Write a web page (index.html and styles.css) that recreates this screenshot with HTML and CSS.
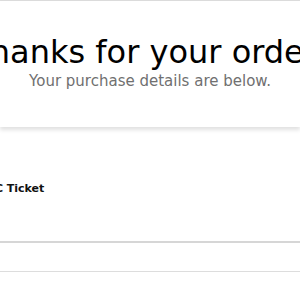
FILE: index.html
```html
<!DOCTYPE html>
<html>
<head>
<meta charset="utf-8">
<link rel="stylesheet" href="styles.css">
</head>
<body>
<div class="page">
  <header class="hero">
    <h1 class="title">Thanks for your order!</h1>
    <p class="subtitle">Your purchase details are below.</p>
  </header>
  <section class="order">
    <div class="item">
      <div class="item-name">ABC Ticket</div>
    </div>
    <div class="row"></div>
  </section>
</div>
</body>
</html>
```
FILE: styles.css
```css
html, body {
  margin: 0;
  padding: 0;
  background: #fff;
  overflow: hidden;
}
.page {
  width: 300px;
  font-family: "DejaVu Sans", "Liberation Sans", sans-serif;
  border-top: 1px solid #dcdcdc;
}
.hero {
  display: flex;
  flex-direction: column;
  align-items: center;
  padding-top: 32px;
  height: 94px;
  box-shadow: 0 3px 4px rgba(0,0,0,0.12);
  position: relative;
}
.title {
  margin: 0;
  font-size: 32px;
  font-weight: normal;
  color: #000;
  white-space: nowrap;
  line-height: 38px;
}
.subtitle {
  margin: 0;
  font-size: 15px;
  color: #707070;
  line-height: 20px;
  white-space: nowrap;
}
.order {
  padding-top: 54px;
}
.item {
  height: 60px;
  border-bottom: 2px solid #d6d6d6;
}
.item-name {
  margin-left: -22px;
  font-size: 11px;
  font-weight: bold;
  color: #111;
  line-height: 16px;
}
.row {
  height: 28px;
  border-bottom: 1px solid #dddddd;
}
```
